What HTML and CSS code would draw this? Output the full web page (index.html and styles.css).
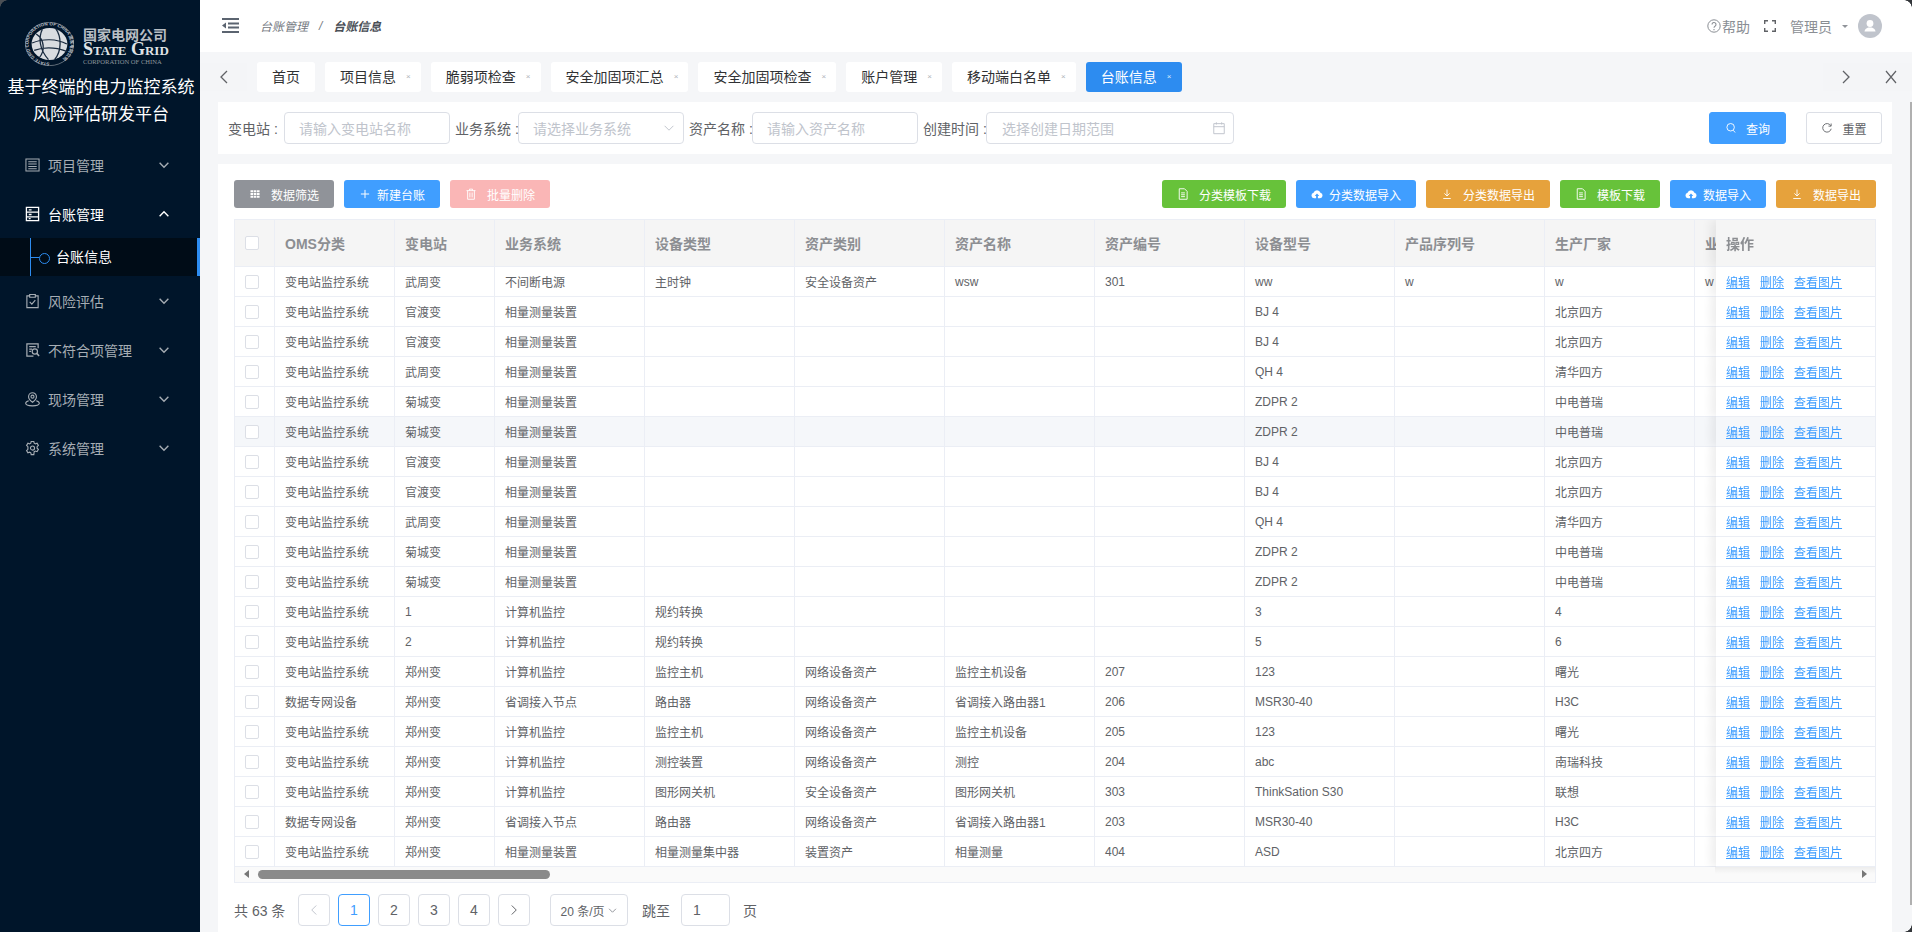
FILE: index.html
```html
<!DOCTYPE html>
<html lang="zh-CN">
<head>
<meta charset="utf-8">
<title>台账信息</title>
<link rel="stylesheet" href="styles.css">
</head>
<body>
<svg class="sprite" aria-hidden="true">
  <symbol id="chev" viewBox="0 0 16 16"><path d="M3 5.500l5 5 5-5" fill="none" stroke="currentColor"/></symbol>
  <symbol id="chev-up" viewBox="0 0 16 16"><path d="M3 10.500l5-5 5 5" fill="none" stroke="currentColor"/></symbol>
  <symbol id="left" viewBox="0 0 16 16"><path d="M11 2L5 8l6 6" fill="none" stroke="currentColor" stroke-width="1.300"/></symbol>
  <symbol id="right" viewBox="0 0 16 16"><path d="M5 2l6 6-6 6" fill="none" stroke="currentColor" stroke-width="1.300"/></symbol>
  <symbol id="close" viewBox="0 0 16 16"><path d="M3 2l10 12M13 2L3 14" fill="none" stroke="currentColor" stroke-width="1.200"/></symbol>
  <symbol id="m-list" viewBox="0 0 16 16"><path d="M1 1.500h14v13H1zM3.500 4.500h9M3.500 7h9M3.500 9.500h9M3.500 12h9" fill="none" stroke="currentColor" stroke-width="1.100"/></symbol>
  <symbol id="m-box" viewBox="0 0 16 16"><path d="M1.500 1h13v14h-13zM1.500 6h13M1.500 11h13M4 3.500h3M4 8.500h3M4 13h2" fill="none" stroke="currentColor" stroke-width="1.400"/></symbol>
  <symbol id="m-check" viewBox="0 0 16 16"><path d="M5 2.500H2v12.500h12V2.500h-3M5 1h6v3H5zM5 9l2.300 2.300L11 7" fill="none" stroke="currentColor" stroke-width="1.200"/></symbol>
  <symbol id="m-doc" viewBox="0 0 16 16"><path d="M14 6V1.500H2v13h7M4.500 4.500h7M4.500 7h3M4.500 9.500h2" fill="none" stroke="currentColor" stroke-width="1.300"/><circle cx="10.500" cy="9.500" r="2.800" fill="none" stroke="currentColor" stroke-width="1.300"/><path d="M12.500 11.500l2.500 3" stroke="currentColor" stroke-width="1.600"/></symbol>
  <symbol id="m-pin" viewBox="0 0 16 16"><path d="M8 11.500C5.500 9.500 3.800 7.800 3.800 5.500a4.200 4.200 0 0 1 8.400 0c0 2.300-1.700 4-4.200 6z" fill="none" stroke="currentColor" stroke-width="1.200"/><circle cx="8" cy="5.500" r="1.600" fill="none" stroke="currentColor" stroke-width="1.200"/><path d="M4 9.800c-2 .6-3.300 1.700-3.300 2.800 0 1.500 3 2.700 7.300 2.700s7.300-1.200 7.300-2.700c0-1.100-1.300-2.200-3.300-2.800" fill="none" stroke="currentColor" stroke-width="1.200"/></symbol>
  <symbol id="m-gear" viewBox="0 0 16 16"><path d="M6.600 1h2.800l.4 1.900 1.300.7 1.800-.7 1.400 2.400-1.400 1.300v1.600l1.400 1.300-1.400 2.400-1.800-.7-1.300.7L9.400 15H6.600l-.4-1.900-1.300-.7-1.800.7-1.400-2.400L3.100 9.400V6.600L1.700 5.300l1.400-2.400 1.800.7 1.300-.7z" fill="none" stroke="currentColor" stroke-width="1.200"/><circle cx="8" cy="8" r="2.200" fill="none" stroke="currentColor" stroke-width="1.200"/></symbol>
  <symbol id="grid" viewBox="0 0 16 16"><path d="M2 3h3.500v2.800H2zM6.300 3h3.500v2.800H6.300zM10.600 3h3.500v2.800h-3.500zM2 6.600h3.500v2.800H2zM6.300 6.600h3.500v2.800H6.300zM10.600 6.600h3.500v2.800h-3.500zM2 10.200h3.500V13H2zM6.300 10.200h3.500V13H6.300zM10.600 10.200h3.500V13h-3.500z" fill="currentColor"/></symbol>
  <symbol id="plus" viewBox="0 0 16 16"><path d="M8 2.500v11M2.500 8h11" stroke="currentColor" stroke-width="1.300"/></symbol>
  <symbol id="trash" viewBox="0 0 16 16"><path d="M2 3.500h12M6 3.500V1.500h4v2M3.500 3.500V15h9V3.500M6.500 6v6.500M9.500 6v6.500" fill="none" stroke="currentColor" stroke-width="1.200"/></symbol>
  <symbol id="doc" viewBox="0 0 16 16"><path d="M3 1h7l3.500 3.500V15H3zM5.500 6.500h5M5.500 9h5M5.500 11.500h5" fill="none" stroke="currentColor" stroke-width="1.200"/></symbol>
  <symbol id="cloud" viewBox="0 0 16 16"><path d="M4 13.500a3.600 3.600 0 0 1-.6-7.100 4.800 4.800 0 0 1 9.200 0 3.600 3.600 0 0 1-.6 7.100H9.200V10.500h1.800L8 7.200 5 10.500h1.800v3z" fill="currentColor"/></symbol>
  <symbol id="down" viewBox="0 0 16 16"><path d="M8 2v8.500M4.500 7.200L8 10.700l3.500-3.500M3 14h10" fill="none" stroke="currentColor" stroke-width="1.200"/></symbol>
  <symbol id="search" viewBox="0 0 16 16"><circle cx="7.500" cy="7" r="5" fill="none" stroke="currentColor" stroke-width="1.200"/><path d="M11 11l2.500 3" stroke="currentColor" stroke-width="1.200"/></symbol>
  <symbol id="refresh" viewBox="0 0 16 16"><path d="M13 5A5.700 5.700 0 1 0 13.600 9" fill="none" stroke="currentColor" stroke-width="1.200"/><path d="M13.500 2v3.500H10" fill="none" stroke="currentColor" stroke-width="1.200"/></symbol>
  <symbol id="cal" viewBox="0 0 16 16"><path d="M2 3h12v11.500H2zM2 6.500h12M5 1.500V4M11 1.500V4" fill="none" stroke="currentColor" stroke-width="1.100"/></symbol>
</svg>

<div class="app">
  <aside class="sidebar">
    <div class="logo">
      <svg class="globe" viewBox="0 0 48 48" preserveAspectRatio="none" aria-hidden="true">
        <defs><path id="ring" d="M24 44.500a20.500 20.500 0 1 1 .01 0"/></defs>
        <circle cx="24" cy="24" r="23.600" fill="none" stroke="#8f979f" stroke-width=".7"/>
        <text class="ring-text"><textPath href="#ring">STATE GRID CORPORATION OF CHINA 国家电网公司</textPath></text>
        <circle cx="24" cy="24" r="17.500" fill="#d9dce0"/>
        <path d="M11 13c8 6 9 18 3 26M17 8c-4 9-3 22 6 33M7 23c10-5 24-5 34 1M9 31c10-4 22-3 32 1M30 7c6 9 6 25-1 34" fill="none" stroke="#1a2b3f" stroke-width="1.300"/>
      </svg>
      <div class="logo-text">
        <div class="logo-cn">国家电网公司</div>
        <div class="logo-en">State Grid</div>
        <div class="logo-sub">CORPORATION OF CHINA</div>
      </div>
    </div>
    <div class="sys-title">基于终端的电力监控系统<br>风险评估研发平台</div>
    <nav class="menu">
      <div class="menu-item"><svg class="menu-ico"><use href="#m-list"/></svg><span>项目管理</span><svg class="menu-arrow"><use href="#chev"/></svg></div>
      <div class="menu-item open"><svg class="menu-ico"><use href="#m-box"/></svg><span>台账管理</span><svg class="menu-arrow"><use href="#chev-up"/></svg></div>
      <div class="sub-item"><span>台账信息</span></div>
      <div class="menu-item"><svg class="menu-ico"><use href="#m-check"/></svg><span>风险评估</span><svg class="menu-arrow"><use href="#chev"/></svg></div>
      <div class="menu-item"><svg class="menu-ico"><use href="#m-doc"/></svg><span>不符合项管理</span><svg class="menu-arrow"><use href="#chev"/></svg></div>
      <div class="menu-item"><svg class="menu-ico"><use href="#m-pin"/></svg><span>现场管理</span><svg class="menu-arrow"><use href="#chev"/></svg></div>
      <div class="menu-item"><svg class="menu-ico"><use href="#m-gear"/></svg><span>系统管理</span><svg class="menu-arrow"><use href="#chev"/></svg></div>
    </nav>
  </aside>

  <main class="main">
    <header class="topbar">
      <svg class="fold" viewBox="0 0 17 17" aria-hidden="true"><path d="M0 1h17v2H0zM6 5.500h11v2H6zM6 9.500h11v2H6zM0 14h17v2H0zM0 8.500l4-3v6z" fill="#5b6470"/></svg>
      <div class="crumbs"><span class="crumb">台账管理</span><span class="crumb-sep">/</span><span class="crumb-cur">台账信息</span></div>
      <div class="top-right">
        <span class="help"><svg class="help-ico" viewBox="0 0 14 14" aria-hidden="true"><circle cx="7" cy="7" r="6.200" fill="none" stroke="currentColor"/><path d="M5 5.500a2 2 0 1 1 3 1.700c-.7.400-1 .8-1 1.600M7 10v1.200" fill="none" stroke="currentColor" stroke-width="1.100"/></svg>帮助</span>
        <svg class="full-ico" viewBox="0 0 12 12" aria-hidden="true"><path d="M.7 4V.7H4M8 .7h3.300V4M11.300 8v3.300H8M4 11.300H.7V8" fill="none" stroke="#606266" stroke-width="1.400"/></svg>
        <span class="user">管理员</span>
        <span class="caret"></span>
        <span class="avatar"><svg viewBox="0 0 24 24" aria-hidden="true"><circle cx="12" cy="9.500" r="3.400" fill="#fff"/><path d="M6.500 17.500c0-2.500 2.500-3.500 3.800-4h3.400c1.300.5 3.800 1.500 3.800 4z" fill="#fff"/></svg></span>
      </div>
    </header>

    <section class="tabs">
      <div class="tab-nav left"><svg class="tab-arrow"><use href="#left"/></svg></div>
      <div class="tab home">首页</div>
      <div class="tab">项目信息<i>×</i></div>
      <div class="tab">脆弱项检查<i>×</i></div>
      <div class="tab">安全加固项汇总<i>×</i></div>
      <div class="tab">安全加固项检查<i>×</i></div>
      <div class="tab">账户管理<i>×</i></div>
      <div class="tab">移动端白名单<i>×</i></div>
      <div class="tab active">台账信息<i>×</i></div>
      <div class="tab-nav right"><svg class="tab-arrow"><use href="#right"/></svg></div>
      <div class="tab-nav end"><svg class="tab-arrow"><use href="#close"/></svg></div>
    </section>

    <section class="filter">
      <span class="lab first">变电站 :</span>
      <div class="inp"><span>请输入变电站名称</span></div>
      <span class="lab">业务系统 :</span>
      <div class="inp"><span>请选择业务系统</span><svg class="inp-ico"><use href="#chev"/></svg></div>
      <span class="lab">资产名称 :</span>
      <div class="inp"><span>请输入资产名称</span></div>
      <span class="lab">创建时间 :</span>
      <div class="inp date"><span>选择创建日期范围</span><svg class="inp-ico"><use href="#cal"/></svg></div>
      <div class="filter-btns">
        <button class="qbtn primary"><svg class="qico"><use href="#search"/></svg>查询</button>
        <button class="qbtn plain"><svg class="qico"><use href="#refresh"/></svg>重置</button>
      </div>
    </section>

    <section class="card">
      <div class="toolbar">
        <button class="btn grey wide"><svg class="bico"><use href="#grid"/></svg>数据筛选</button>
        <button class="btn blue"><svg class="bico"><use href="#plus"/></svg>新建台账</button>
        <button class="btn pink wide"><svg class="bico"><use href="#trash"/></svg>批量删除</button>
        <span class="spacer"></span>
        <button class="btn green wide"><svg class="bico"><use href="#doc"/></svg>分类模板下载</button>
        <button class="btn blue"><svg class="bico"><use href="#cloud"/></svg>分类数据导入</button>
        <button class="btn orange wide"><svg class="bico"><use href="#down"/></svg>分类数据导出</button>
        <button class="btn green wide"><svg class="bico"><use href="#doc"/></svg>模板下载</button>
        <button class="btn blue"><svg class="bico"><use href="#cloud"/></svg>数据导入</button>
        <button class="btn orange wide"><svg class="bico"><use href="#down"/></svg>数据导出</button>
      </div>

      <div class="table-wrap">
        <table class="grid-table">
          <colgroup><col class="c-chk"><col class="c-oms"><col class="c-sta"><col class="c-std"><col class="c-std"><col class="c-std"><col class="c-std"><col class="c-std"><col class="c-std"><col class="c-std"><col class="c-std"><col class="c-std"><col class="c-op"></colgroup>
          <thead><tr><th><span class="chk"></span></th><th>OMS分类</th><th>变电站</th><th>业务系统</th><th>设备类型</th><th>资产类别</th><th>资产名称</th><th>资产编号</th><th>设备型号</th><th>产品序列号</th><th>生产厂家</th><th>业务</th><th class="op">操作</th></tr></thead>
          <tbody>
            <tr><td><span class="chk"></span></td><td>变电站监控系统</td><td>武周变</td><td>不间断电源</td><td>主时钟</td><td>安全设备资产</td><td>wsw</td><td>301</td><td>ww</td><td>w</td><td>w</td><td>w</td><td class="op"><a>编辑</a><a>删除</a><a>查看图片</a></td></tr>
            <tr><td><span class="chk"></span></td><td>变电站监控系统</td><td>官渡变</td><td>相量测量装置</td><td></td><td></td><td></td><td></td><td>BJ 4</td><td></td><td>北京四方</td><td></td><td class="op"><a>编辑</a><a>删除</a><a>查看图片</a></td></tr>
            <tr><td><span class="chk"></span></td><td>变电站监控系统</td><td>官渡变</td><td>相量测量装置</td><td></td><td></td><td></td><td></td><td>BJ 4</td><td></td><td>北京四方</td><td></td><td class="op"><a>编辑</a><a>删除</a><a>查看图片</a></td></tr>
            <tr><td><span class="chk"></span></td><td>变电站监控系统</td><td>武周变</td><td>相量测量装置</td><td></td><td></td><td></td><td></td><td>QH 4</td><td></td><td>清华四方</td><td></td><td class="op"><a>编辑</a><a>删除</a><a>查看图片</a></td></tr>
            <tr><td><span class="chk"></span></td><td>变电站监控系统</td><td>菊城变</td><td>相量测量装置</td><td></td><td></td><td></td><td></td><td>ZDPR 2</td><td></td><td>中电普瑞</td><td></td><td class="op"><a>编辑</a><a>删除</a><a>查看图片</a></td></tr>
            <tr class="hover"><td><span class="chk"></span></td><td>变电站监控系统</td><td>菊城变</td><td>相量测量装置</td><td></td><td></td><td></td><td></td><td>ZDPR 2</td><td></td><td>中电普瑞</td><td></td><td class="op"><a>编辑</a><a>删除</a><a>查看图片</a></td></tr>
            <tr><td><span class="chk"></span></td><td>变电站监控系统</td><td>官渡变</td><td>相量测量装置</td><td></td><td></td><td></td><td></td><td>BJ 4</td><td></td><td>北京四方</td><td></td><td class="op"><a>编辑</a><a>删除</a><a>查看图片</a></td></tr>
            <tr><td><span class="chk"></span></td><td>变电站监控系统</td><td>官渡变</td><td>相量测量装置</td><td></td><td></td><td></td><td></td><td>BJ 4</td><td></td><td>北京四方</td><td></td><td class="op"><a>编辑</a><a>删除</a><a>查看图片</a></td></tr>
            <tr><td><span class="chk"></span></td><td>变电站监控系统</td><td>武周变</td><td>相量测量装置</td><td></td><td></td><td></td><td></td><td>QH 4</td><td></td><td>清华四方</td><td></td><td class="op"><a>编辑</a><a>删除</a><a>查看图片</a></td></tr>
            <tr><td><span class="chk"></span></td><td>变电站监控系统</td><td>菊城变</td><td>相量测量装置</td><td></td><td></td><td></td><td></td><td>ZDPR 2</td><td></td><td>中电普瑞</td><td></td><td class="op"><a>编辑</a><a>删除</a><a>查看图片</a></td></tr>
            <tr><td><span class="chk"></span></td><td>变电站监控系统</td><td>菊城变</td><td>相量测量装置</td><td></td><td></td><td></td><td></td><td>ZDPR 2</td><td></td><td>中电普瑞</td><td></td><td class="op"><a>编辑</a><a>删除</a><a>查看图片</a></td></tr>
            <tr><td><span class="chk"></span></td><td>变电站监控系统</td><td>1</td><td>计算机监控</td><td>规约转换</td><td></td><td></td><td></td><td>3</td><td></td><td>4</td><td></td><td class="op"><a>编辑</a><a>删除</a><a>查看图片</a></td></tr>
            <tr><td><span class="chk"></span></td><td>变电站监控系统</td><td>2</td><td>计算机监控</td><td>规约转换</td><td></td><td></td><td></td><td>5</td><td></td><td>6</td><td></td><td class="op"><a>编辑</a><a>删除</a><a>查看图片</a></td></tr>
            <tr><td><span class="chk"></span></td><td>变电站监控系统</td><td>郑州变</td><td>计算机监控</td><td>监控主机</td><td>网络设备资产</td><td>监控主机设备</td><td>207</td><td>123</td><td></td><td>曙光</td><td></td><td class="op"><a>编辑</a><a>删除</a><a>查看图片</a></td></tr>
            <tr><td><span class="chk"></span></td><td>数据专网设备</td><td>郑州变</td><td>省调接入节点</td><td>路由器</td><td>网络设备资产</td><td>省调接入路由器1</td><td>206</td><td>MSR30-40</td><td></td><td>H3C</td><td></td><td class="op"><a>编辑</a><a>删除</a><a>查看图片</a></td></tr>
            <tr><td><span class="chk"></span></td><td>变电站监控系统</td><td>郑州变</td><td>计算机监控</td><td>监控主机</td><td>网络设备资产</td><td>监控主机设备</td><td>205</td><td>123</td><td></td><td>曙光</td><td></td><td class="op"><a>编辑</a><a>删除</a><a>查看图片</a></td></tr>
            <tr><td><span class="chk"></span></td><td>变电站监控系统</td><td>郑州变</td><td>计算机监控</td><td>测控装置</td><td>网络设备资产</td><td>测控</td><td>204</td><td>abc</td><td></td><td>南瑞科技</td><td></td><td class="op"><a>编辑</a><a>删除</a><a>查看图片</a></td></tr>
            <tr><td><span class="chk"></span></td><td>变电站监控系统</td><td>郑州变</td><td>计算机监控</td><td>图形网关机</td><td>安全设备资产</td><td>图形网关机</td><td>303</td><td>ThinkSation S30</td><td></td><td>联想</td><td></td><td class="op"><a>编辑</a><a>删除</a><a>查看图片</a></td></tr>
            <tr><td><span class="chk"></span></td><td>数据专网设备</td><td>郑州变</td><td>省调接入节点</td><td>路由器</td><td>网络设备资产</td><td>省调接入路由器1</td><td>203</td><td>MSR30-40</td><td></td><td>H3C</td><td></td><td class="op"><a>编辑</a><a>删除</a><a>查看图片</a></td></tr>
            <tr><td><span class="chk"></span></td><td>变电站监控系统</td><td>郑州变</td><td>相量测量装置</td><td>相量测量集中器</td><td>装置资产</td><td>相量测量</td><td>404</td><td>ASD</td><td></td><td>北京四方</td><td></td><td class="op"><a>编辑</a><a>删除</a><a>查看图片</a></td></tr>
          </tbody>
        </table>
      </div>
      <div class="hscroll"><span class="tri-l"></span><span class="thumb"></span><span class="tri-r"></span></div>

      <div class="pager">
        <span class="total">共 63 条</span>
        <span class="pg disabled"><svg class="pg-ico"><use href="#left"/></svg></span>
        <span class="pg cur">1</span>
        <span class="pg">2</span>
        <span class="pg">3</span>
        <span class="pg">4</span>
        <span class="pg"><svg class="pg-ico"><use href="#right"/></svg></span>
        <span class="size">20 条/页<svg class="size-ico"><use href="#chev"/></svg></span>
        <span class="jump">跳至</span>
        <span class="jump-inp">1</span>
        <span class="jump-unit">页</span>
      </div>
    </section>
  </main>
</div>

<span class="win-scroll"></span>
<span class="corner tl"></span>
<span class="corner tr"></span>
<span class="corner br"></span>
</body>
</html>
```
FILE: styles.css
```css
* { box-sizing: border-box; }
html, body { margin: 0; height: 932px; overflow: hidden; }
body { font-family: "Liberation Sans", "Noto Sans CJK SC", sans-serif; font-size: 12px; color: #606266; background: #f5f6f8; position: relative; }
.sprite { position: absolute; width: 0; height: 0; }
.app { display: flex; height: 932px; }

/* sidebar */
.sidebar { width: 200px; flex: none; background: #00152a; color: #a6adb4; }
.logo { display: flex; padding: 19px 0 0 25px; height: 67px; }
.globe { width: 49px; height: 44px; flex: none; margin-top: 3px; }
.ring-text { font-size: 4.6px; fill: #b8bec4; font-family: "Liberation Sans", "Noto Sans CJK SC", sans-serif; font-weight: 700; }
.logo-text { margin-left: 9px; padding-top: 9px; color: #c9ced3; width: 86px; }
.logo-cn { font-size: 14px; line-height: 14px; font-weight: 700; white-space: nowrap; color: #b9bfc5; }
.logo-en { font-family: "Liberation Serif", serif; font-variant: small-caps; font-weight: 700; font-size: 18px; line-height: 14px; margin-top: 0; color: #dfe2e5; white-space: nowrap; }
.logo-sub { font-family: "Liberation Serif", serif; font-size: 6.6px; line-height: 7px; color: #8d959d; white-space: nowrap; margin-top: 2px; }
.sys-title { margin-top: 7px; padding-left: 2px; font-size: 17px; line-height: 27px; color: #fff; text-align: center; white-space: nowrap; }
.menu { margin-top: 12px; }
.menu-item { display: flex; align-items: center; height: 49px; padding-left: 25px; font-size: 14px; }
.menu-item.open { color: #fff; }
.menu-ico { width: 15px; height: 16px; flex: none; margin-right: 8px; }
.menu-arrow { width: 14px; height: 14px; margin-left: auto; margin-right: 29px; stroke-width: 1.600; }
.sub-item { position: relative; height: 38px; background: #000c17 linear-gradient(#2d8cf0, #2d8cf0) 30px 50% / 9px 1px no-repeat; color: #fff; font-size: 14px; line-height: 38px; padding-left: 56px; border-right: 3px solid #2d8cf0; }
.sub-item::before { content: ""; position: absolute; left: 30px; top: 0; bottom: 0; width: 1px; background: #2d8cf0; }
.sub-item::after { content: ""; position: absolute; left: 39px; top: 15px; width: 9px; height: 9px; border: 1.500px solid #2d8cf0; border-radius: 50%; }

/* top bar */
.main { flex: 1; min-width: 0; display: flex; flex-direction: column; }
.topbar { height: 52px; flex: none; background: #fff; display: flex; align-items: center; padding: 0 0 1px 22px; }
.fold { width: 17px; height: 17px; }
.crumbs { margin-left: 21px; font-style: italic; display: flex; align-items: center; }
.crumb { color: #757a82; }
.crumb-sep { margin: 0 11px; color: #757a82; }
.crumb-cur { color: #4a4f57; font-weight: 700; }
.top-right { margin-left: auto; display: flex; align-items: center; padding-right: 30px; font-size: 14px; color: #8a8e94; }
.help { display: flex; align-items: center; }
.help-ico { width: 14px; height: 14px; margin-right: 1px; }
.full-ico { width: 12px; height: 12px; margin-left: 14px; }
.user { margin-left: 14px; }
.caret { margin-left: 10px; width: 0; height: 0; border: 3px solid transparent; border-top-color: #909399; margin-top: 4px; }
.avatar { margin-left: 10px; width: 24px; height: 24px; border-radius: 50%; background: #c0c4cc; display: block; }
.avatar svg { display: block; width: 24px; height: 24px; }

/* tabs */
.tabs { height: 30px; flex: none; margin-top: 10px; display: flex; gap: 10px; align-items: stretch; position: relative; font-size: 14px; }
.tab { background: #fff; border-radius: 3px; line-height: 30px; padding-left: 15px; color: #303133; white-space: nowrap; display: flex; }
.tab.home { padding-right: 15px; }
.tab i { width: 24.800px; text-align: center; font-style: normal; font-size: 8px; color: #b0b4ba; }
.tab.active { background: #2d8cf0; color: #fff; }
.tab.active i { color: #dbe9fb; }
.tab-nav { display: flex; align-items: center; justify-content: center; background: #f4f5f7; color: #606266; height: 28px; margin-top: 1px; }
.tab-nav.left { width: 47px; }
.tab-nav.right { width: 47px; margin-left: auto; margin-right: -10px; padding-right: 2px; }
.tab-nav.end { width: 42px; }
.tab-arrow { width: 16px; height: 16px; }

/* filter */
.filter { height: 52px; flex: none; margin: 10px 20px 0 18px; background: #fff; display: flex; align-items: center; padding: 0 10px; font-size: 14px; }
.lab { width: 68px; padding-left: 5px; white-space: nowrap; flex: none; }
.lab.first { width: 56px; padding-left: 0; }
.inp { width: 166px; height: 32px; flex: none; border: 1px solid #dcdfe6; border-radius: 4px; padding: 0 14px; display: flex; align-items: center; justify-content: space-between; color: #c0c4cc; white-space: nowrap; }
.inp.date { width: 248px; padding-left: 15px; }
.inp-ico { width: 14px; height: 14px; margin-right: -7px; color: #c0c4cc; stroke-width: 1.100; }
.filter-btns { margin-left: auto; display: flex; gap: 20px; }
.qbtn { height: 32px; width: 77px; border-radius: 3px; border: 1px solid #dcdfe6; font: inherit; font-size: 12px; display: flex; align-items: center; justify-content: center; padding: 0; }
.qbtn.primary { background: #409eff; border-color: #409eff; color: #fff; }
.qbtn.plain { background: #fff; color: #606266; width: 76px; }
.qico { width: 12px; height: 12px; margin-right: 9px; }

/* card */
.card { flex: 1; min-height: 0; margin: 10px 20px 0 18px; background: #fff; padding: 16px 16px 0; }
.toolbar { display: flex; gap: 10px; height: 28px; }
.spacer { flex: 1; }
.btn { height: 28px; border: 0; border-radius: 3px; color: #fff; font: inherit; font-size: 12px; padding: 0 15px; display: flex; align-items: center; white-space: nowrap; }
.bico { width: 12px; height: 12px; margin-right: 6px; flex: none; }
.btn.wide .bico { margin-right: 10px; }
.grey { background: #909399; }
.blue { background: #409eff; }
.pink { background: #fab6b6; }
.green { background: #67c23a; }
.orange { background: #e6a23c; }

/* table */
.table-wrap { margin-top: 11px; height: 648px; width: 1642px; overflow: hidden; border-top: 1px solid #ebeef5; border-left: 1px solid #ebeef5; }
.grid-table { width: 1770px; table-layout: fixed; border-collapse: separate; border-spacing: 0; }
.c-chk { width: 40px; }
.c-oms { width: 120px; }
.c-sta { width: 100px; }
.c-std { width: 150px; }
.c-op { width: 160px; }
th, td { border-right: 1px solid #ebeef5; border-bottom: 1px solid #ebeef5; padding: 0 10px; text-align: left; white-space: nowrap; overflow: hidden; background: #fff; }
th { height: 47px; background: #f5f5f5; font-size: 14px; font-weight: 700; color: #8c8e92; }
td { height: 30px; font-size: 12px; color: #606266; }
.hover td { background: #f5f7fa; }
.chk { display: block; width: 14px; height: 14px; border: 1px solid #dcdfe6; border-radius: 2px; background: #fff; }
.op { position: sticky; right: 0; box-shadow: -5px 0 10px rgba(0, 0, 0, .07); clip-path: inset(0 0 -12px -14px); }
td.op a { color: #409eff; text-decoration: underline; margin-right: 10px; }
.hscroll { position: relative; width: 1642px; height: 16px; background: #fafafa; border: 1px solid #ebeef5; border-top: 0; display: flex; align-items: center; padding: 0 8px 1px 9px; }
.hscroll::after { content: ""; position: absolute; right: 0; top: 0; width: 160px; height: 7px; background: linear-gradient(rgba(0, 0, 0, .05), rgba(0, 0, 0, 0)); }
.thumb { width: 292px; height: 9px; border-radius: 5px; background: #8a8a8a; margin-left: 9px; }
.tri-l, .tri-r { width: 0; height: 0; border: 4px solid transparent; }
.tri-l { border-right: 5px solid #777; border-left: 0; }
.tri-r { border-left: 5px solid #777; border-right: 0; margin-left: auto; }

/* pager */
.pager { margin-top: 11px; height: 32px; display: flex; align-items: center; font-size: 14px; color: #606266; }
.total { width: 64px; white-space: nowrap; }
.pg { width: 32px; height: 32px; margin-right: 8px; flex: none; border: 1px solid #dcdfe6; border-radius: 4px; display: flex; align-items: center; justify-content: center; }
.pg.cur { border-color: #409eff; color: #409eff; }
.pg.disabled { color: #c0c4cc; }
.pg-ico { width: 12px; height: 12px; }
.size { width: 78px; height: 32px; margin-left: 12px; border: 1px solid #dcdfe6; border-radius: 4px; font-size: 12px; display: flex; align-items: center; justify-content: center; white-space: nowrap; flex: none; }
.size-ico { width: 11px; height: 11px; margin-left: 2px; color: #909399; stroke-width: 1.400; }
.jump { margin-left: 14px; white-space: nowrap; }
.jump-inp { margin-left: 11px; width: 49px; height: 32px; border: 1px solid #dcdfe6; border-radius: 4px; line-height: 30px; padding-left: 11px; }
.jump-unit { margin-left: 13px; }

/* window chrome over everything */
.win-scroll { position: absolute; right: 0; top: 102px; width: 2px; height: 803px; background: #b0b0b0; }
.corner { position: absolute; width: 8px; height: 8px; }
.corner.tl { left: 0; top: 0; background: radial-gradient(circle at 8px 8px, transparent 7.500px, #4a4f55 8px); }
.corner.tr { right: 0; top: 0; background: radial-gradient(circle at 0 8px, transparent 7.500px, #33363a 8px); }
.corner.br { right: 0; bottom: 0; background: radial-gradient(circle at 0 0, transparent 7.500px, #33363a 8px); }
```
